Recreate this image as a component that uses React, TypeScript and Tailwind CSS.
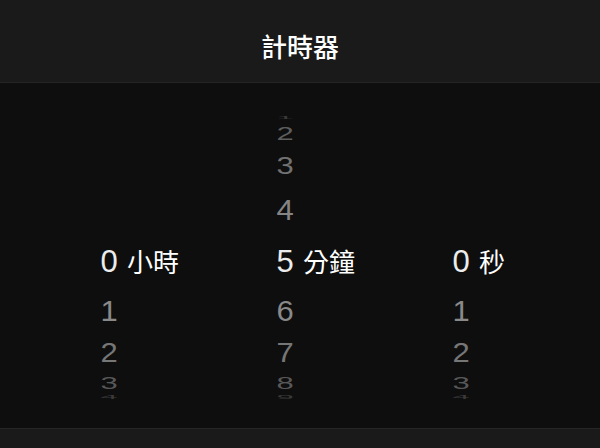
import React from "react";

type Row = { gap: string; digit: string };

// Wheel slots from top (k = -4) to bottom (k = 4); index 4 is the selected line.
const ROWS: Row[] = [
  { gap: "mt-[34px]", digit: "scale-y-[0.12] text-[#3a3a3a]" },
  { gap: "mt-[16px]", digit: "scale-y-[0.6] text-[#5e5e5e]" },
  { gap: "mt-[32px]", digit: "scale-y-[0.8] text-[#727272]" },
  { gap: "mt-[44px]", digit: "scale-y-[0.98] text-[#858585]" },
  { gap: "mt-[52px]", digit: "text-[#ececec]" },
  { gap: "mt-[49px]", digit: "scale-y-[0.98] text-[#898989]" },
  { gap: "mt-[42px]", digit: "scale-y-[0.9] text-[#767676]" },
  { gap: "mt-[31px]", digit: "scale-y-[0.55] text-[#585858]" },
  { gap: "mt-[14px]", digit: "scale-y-[0.15] text-[#3a3a3a]" },
];

const COLUMNS = [
  { label: "小時", values: [null, null, null, null, 0, 1, 2, 3, 4] },
  { label: "分鐘", values: [1, 2, 3, 4, 5, 6, 7, 8, 9] },
  { label: "秒", values: [null, null, null, null, 0, 1, 2, 3, 4] },
];

const cjk = "font-['Noto_Sans_CJK_TC','Noto_Sans',sans-serif]";

function Wheel({ label, values }: { label: string; values: (number | null)[] }) {
  return (
    <div className="flex w-[176px] flex-col pl-[55px]">
      {ROWS.map((row, i) => (
        <div key={i} className={`flex h-0 items-center ${row.gap}`}>
          <span
            className={`inline-block w-9 text-center font-['Liberation_Sans',Arial,sans-serif] text-[31px] leading-none ${row.digit}`}
          >
            {values[i] ?? ""}
          </span>
          {i === 4 && (
            <span className={`${cjk} text-[26px] leading-none text-white`}>{label}</span>
          )}
        </div>
      ))}
    </div>
  );
}

export default function App() {
  return (
    <div className="flex h-[448px] w-[600px] flex-col overflow-hidden bg-[#0e0e0e]">
      <header className="flex h-[83px] shrink-0 items-center justify-center border-b border-[#242424] bg-[#1a1a1a] pt-[8px]">
        <h1 className={`${cjk} text-[26px] font-medium text-white`}>計時器</h1>
      </header>

      <main className="flex flex-1 justify-center overflow-hidden">
        {COLUMNS.map((c) => (
          <Wheel key={c.label} label={c.label} values={c.values} />
        ))}
      </main>

      <footer className="h-[20px] shrink-0 border-t border-[#262626] bg-[#1a1a1a]" />
    </div>
  );
}
